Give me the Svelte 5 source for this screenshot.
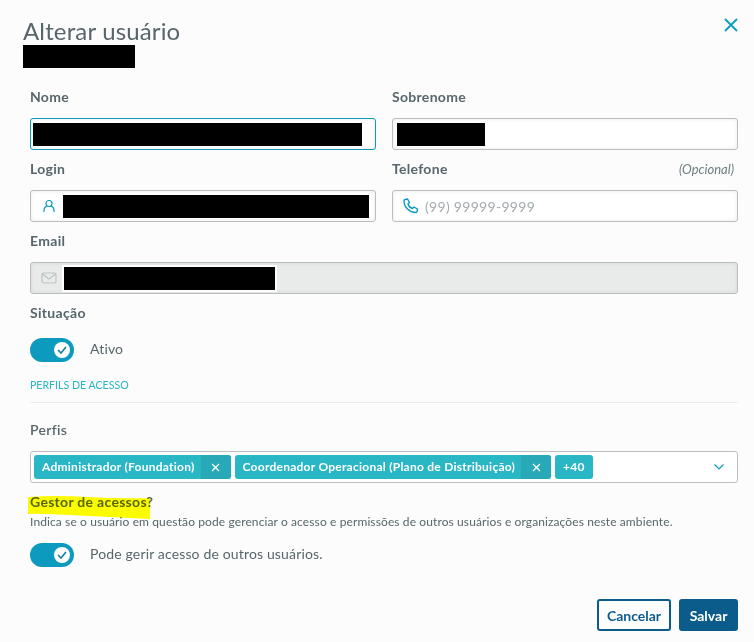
<script>
  const profiles = ["Administrador (Foundation)", "Coordenador Operacional (Plano de Distribuição)"];
</script>

<div class="modal">
  <header>
    <h1>Alterar usuário</h1>
    <span class="mask sub"></span>
    <button class="close" aria-label="Fechar">
      <svg width="14" height="14" viewBox="0 0 14 14"><path d="M1 1l12 12M13 1L1 13" /></svg>
    </button>
  </header>

  <div class="grid">
    <div class="field">
      <span class="label">Nome</span>
      <div class="input focus"><span class="mask nome"></span></div>
    </div>
    <div class="field">
      <span class="label">Sobrenome</span>
      <div class="input"><span class="mask sobrenome"></span></div>
    </div>
    <div class="field">
      <span class="label">Login</span>
      <div class="input">
        <svg class="ico" width="16" height="16" viewBox="0 0 16 16"><circle cx="8" cy="5.500" r="3" /><path d="M3 14v-1.500C3 10.500 4.500 8.500 6 8M13 14v-1.500c0-2-1.500-4-3-4.500" /></svg>
        <span class="mask login"></span>
      </div>
    </div>
    <div class="field">
      <div class="label-row"><span class="label">Telefone</span><em>(Opcional)</em></div>
      <div class="input">
        <svg class="ico phone" width="16" height="16" viewBox="0 0 16 16"><path d="M2 1.500l2.500-.5 2 3.500-1.500 1.500c.6 2 2.400 3.900 4.500 4.500l1.500-1.500 3.500 2-.5 2.500c-.2.700-.8 1-1.500 1C6.500 14.500 1 9 1 3c0-.7.400-1.300 1-1.500z" /></svg>
        <span class="placeholder">(99) 99999-9999</span>
      </div>
    </div>
    <div class="field wide">
      <span class="label">Email</span>
      <div class="input disabled">
        <svg class="ico grey" width="16" height="12" viewBox="0 0 16 12"><rect x="1" y="1" width="14" height="10" rx="1.500" /><path d="M1.500 2L8 7l6.500-5" /></svg>
        <span class="mask email"></span>
      </div>
    </div>
  </div>

  <span class="label">Situação</span>
  <div class="switch-row first">
    <span class="switch"><span class="knob"><svg width="10" height="8" viewBox="0 0 10 8"><path d="M1 4l3 3 5-6" /></svg></span></span>
    <span class="switch-text">Ativo</span>
  </div>

  <div class="section">PERFILS DE ACESSO</div>
  <hr />

  <span class="label perfis">Perfis</span>
  <div class="select">
    {#each profiles as p}
      <span class="tag">
        <span class="tag-text">{p}</span>
        <span class="tag-x"><svg width="9" height="9" viewBox="0 0 9 9"><path d="M1 1l7 7M8 1L1 8" /></svg></span>
      </span>
    {/each}
    <span class="tag"><span class="tag-text more">+40</span></span>
    <svg class="chev" width="10" height="6" viewBox="0 0 10 6"><path d="M.5.500L5 5 9.500.500" /></svg>
  </div>

  <div class="gestor">
    <span class="label">Gestor de acessos?</span>
    <svg class="highlight" width="126" height="27" viewBox="0 0 126 27"><path d="M2 3Q30 1 62 3T124 4L124 25Q84 23 44 21T2 20Z" /></svg>
  </div>
  <p class="hint">Indica se o usuário em questão pode gerenciar o acesso e permissões de outros usuários e organizações neste ambiente.</p>
  <div class="switch-row">
    <span class="switch"><span class="knob"><svg width="10" height="8" viewBox="0 0 10 8"><path d="M1 4l3 3 5-6" /></svg></span></span>
    <span class="switch-text">Pode gerir acesso de outros usuários.</span>
  </div>

  <footer>
    <button class="btn cancel">Cancelar</button>
    <button class="btn save">Salvar</button>
  </footer>
</div>

<style>
  :global(body) {
    background: #fcfcfc;
  }
  .modal {
    width: 754px;
    height: 642px;
    box-sizing: border-box;
    padding: 0 16px 0 30px;
    font-family: "Lato", "Open Sans", sans-serif;
    color: #58666b;
    overflow: hidden;
  }
  header {
    position: relative;
    height: 86px;
  }
  h1 {
    margin: 0 0 0 -7px;
    padding-top: 17px;
    font-size: 24px;
    line-height: 28px;
    font-weight: 400;
    letter-spacing: 0.15px;
    color: #58666b;
  }
  .mask {
    display: block;
    background: #000;
    height: 23px;
  }
  .sub {
    width: 112px;
    margin-left: -7px;
  }
  .close {
    position: absolute;
    right: 0;
    top: 18px;
    background: none;
    border: 0;
    padding: 0;
    width: 14px;
    height: 14px;
    line-height: 0;
  }
  .close path {
    fill: none;
    stroke: #0c9abe;
    stroke-width: 1.800;
  }
  .grid {
    display: grid;
    grid-template-columns: 346px 346px;
    column-gap: 16px;
  }
  .wide {
    grid-column: span 2;
  }
  .field {
    height: 72px;
  }
  .label {
    display: block;
    font-size: 14px;
    line-height: 22px;
    font-weight: 700;
    letter-spacing: 0.3px;
    color: #58666b;
  }
  .label-row {
    display: flex;
    justify-content: space-between;
    align-items: center;
    padding-right: 4px;
  }
  em {
    font-size: 13px;
    color: #6f7d82;
  }
  .input {
    margin-top: 10px;
    height: 32px;
    box-sizing: border-box;
    border: 1px solid #b9bfc0;
    border-radius: 3px;
    background: #fff;
    box-shadow: inset 0 0 4px rgba(0, 0, 0, 0.08);
    display: flex;
    align-items: center;
    padding: 0 3px;
    font-size: 14px;
  }
  .focus {
    border-color: #0c9abe;
  }
  .disabled {
    background: #e9ebeb;
  }
  .ico {
    margin-left: 7px;
    flex: none;
  }
  .ico path,
  .ico circle,
  .ico rect {
    fill: none;
    stroke: #0c9abe;
    stroke-width: 1.200;
  }
  .ico.phone path {
    stroke-width: 1.400;
  }
  .ico.grey path,
  .ico.grey rect {
    stroke: #bcc3c5;
  }
  .placeholder {
    margin-left: 6px;
    color: #a4abae;
    letter-spacing: 0.3px;
  }
  .nome {
    width: 329px;
    margin-left: -1px;
  }
  .sobrenome {
    width: 88px;
    margin-left: 1px;
  }
  .login {
    width: 306px;
    margin-left: 6px;
  }
  .email {
    width: 211px;
    margin-left: 7px;
    outline: 2px solid #fff;
  }
  .switch-row {
    display: flex;
    align-items: center;
    gap: 16px;
    font-size: 14px;
    height: 24px;
    letter-spacing: 0.15px;
  }
  .switch-text {
    margin-bottom: 4px;
  }
  .first {
    margin-top: 14px;
  }
  .switch {
    width: 44px;
    height: 24px;
    border-radius: 12px;
    background: #0c9abe;
    position: relative;
    flex: none;
  }
  .knob {
    position: absolute;
    right: 4px;
    top: 4px;
    width: 16px;
    height: 16px;
    border-radius: 50%;
    background: #fff;
    display: flex;
    align-items: center;
    justify-content: center;
  }
  .knob path {
    fill: none;
    stroke: #0c7fa3;
    stroke-width: 1.600;
  }
  .section {
    margin-top: 14px;
    font-size: 10.6px;
    line-height: 18px;
    color: #29b6c5;
  }
  hr {
    margin: 8px 0 0;
    border: 0;
    border-top: 1px solid #ebeded;
    width: 708px;
  }
  .perfis {
    margin-top: 16px;
    font-weight: 600;
  }
  .select {
    margin-top: 10px;
    width: 708px;
    height: 32px;
    box-sizing: border-box;
    border: 1px solid #b9bfc0;
    border-radius: 3px;
    background: #fff;
    display: flex;
    align-items: center;
    gap: 4px;
    padding: 0 3px;
    position: relative;
  }
  .tag {
    display: flex;
    height: 24px;
    border-radius: 3px;
    overflow: hidden;
    background: #29b6c5;
    color: #fff;
    font-size: 12px;
    font-weight: 700;
    line-height: 24px;
    letter-spacing: 0.25px;
  }
  .tag-text {
    padding: 0 6px 0 8px;
  }
  .more {
    padding: 0 8px;
  }
  .tag-x {
    width: 30px;
    background: #27a9b8;
    display: flex;
    align-items: center;
    justify-content: center;
  }
  .tag-x path {
    fill: none;
    stroke: #fff;
    stroke-width: 1.300;
  }
  .chev {
    position: absolute;
    right: 13px;
    top: 12px;
  }
  .chev path {
    fill: none;
    stroke: #0c9abe;
    stroke-width: 1.200;
  }
  .gestor {
    position: relative;
    margin-top: 8px;
  }
  .highlight {
    position: absolute;
    left: -4px;
    top: 3px;
    mix-blend-mode: multiply;
  }
  .highlight path {
    fill: #ffff00;
  }
  .hint {
    margin: 1px 0 0;
    font-size: 12px;
    line-height: 16px;
    letter-spacing: 0.11px;
    color: #58666b;
  }
  .switch-row:not(.first) {
    margin-top: 13px;
  }
  footer {
    margin-top: 32px;
    width: 708px;
    display: flex;
    justify-content: flex-end;
    gap: 8px;
  }
  .btn {
    height: 32px;
    box-sizing: border-box;
    border-radius: 3px;
    font-family: inherit;
    font-size: 14px;
    font-weight: 700;
    padding: 0;
  }
  .cancel {
    width: 74px;
    background: #fff;
    border: 2px solid #0b5c8b;
    color: #0b5c8b;
  }
  .save {
    width: 59px;
    background: #0b5c8b;
    border: 0;
    color: #fff;
  }
</style>
